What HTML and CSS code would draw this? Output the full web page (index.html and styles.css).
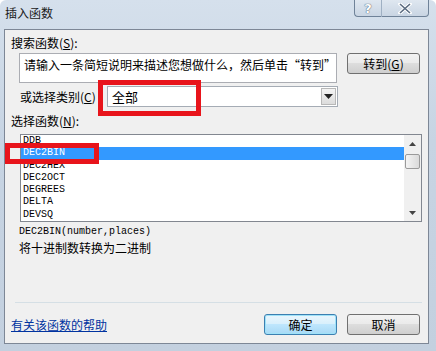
FILE: index.html
```html
<!DOCTYPE html>
<html lang="zh-CN">
<head>
    <meta charset="UTF-8">
    <title>插入函数</title>
    <link rel="stylesheet" href="styles.css">
</head>
<body>

<div class="window">
    <!-- 标题栏 -->
    <div class="titlebar">
        <div class="title">插入函数</div>
        <div class="caption-buttons">
            <div class="cap-btn help">?</div>
            <div class="cap-btn close">
                <svg width="14" height="11" viewBox="0 0 14 11">
                    <path d="M2 1 L12 10 M12 1 L2 10" stroke="#fff" stroke-width="3.4" stroke-linecap="square"/>
                    <path d="M2 1 L12 10 M12 1 L2 10" stroke="#5a6b80" stroke-width="1.6"/>
                </svg>
            </div>
        </div>
    </div>

    <div class="client">
        <div class="label first">搜索函数(<u>S</u>):</div>
        <div class="row search-row">
            <div class="search-box">请输入一条简短说明来描述您想做什么，然后单击“转到”</div>
            <div class="btn go-btn">转到(<u>G</u>)</div>
        </div>

        <div class="row category-row">
            <div class="category-label">或选择类别(<u>C</u>)</div>
            <div class="combo">
                <span class="combo-text">全部</span>
                <span class="combo-arrow">
                    <svg width="9" height="5" viewBox="0 0 9 5"><path d="M0 0 H9 L4.5 5 Z" fill="#222"/></svg>
                </span>
            </div>
        </div>

        <div class="label list-label">选择函数(<u>N</u>):</div>
        <div class="listbox">
            <div class="items">
                <div class="item">DDB</div>
                <div class="item selected">DEC2BIN</div>
                <div class="item">DEC2HEX</div>
                <div class="item">DEC2OCT</div>
                <div class="item">DEGREES</div>
                <div class="item">DELTA</div>
                <div class="item">DEVSQ</div>
            </div>
            <div class="scrollbar">
                <svg width="7" height="4" viewBox="0 0 7 4"><path d="M0 4 H7 L3.5 0 Z" fill="#444"/></svg>
                <div class="thumb"></div>
                <div class="track"></div>
                <svg width="7" height="4" viewBox="0 0 7 4"><path d="M0 0 H7 L3.5 4 Z" fill="#444"/></svg>
            </div>
        </div>

        <div class="signature">DEC2BIN(number,places)</div>
        <div class="description">将十进制数转换为二进制</div>

        <div class="spacer"></div>
        <div class="separator"></div>

        <div class="row footer-row">
            <a class="help-link" href="#">有关该函数的帮助</a>
            <div class="footer-buttons">
                <div class="btn ok-btn">确定</div>
                <div class="btn cancel-btn">取消</div>
            </div>
        </div>
    </div>

    <!-- 红色标注框 -->
    <div class="mark mark-category"></div>
    <div class="mark mark-item"></div>
</div>

</body>
</html>
```

FILE: styles.css
```css
body {
    margin: 0;
    font-family: "Noto Sans CJK SC", "DejaVu Sans", sans-serif;
    font-size: 12px;
    color: #000;
    background-color: #fff;
}
.window {
    position: relative;
    width: 436px;
    height: 351px;
    box-sizing: border-box;
    display: flex;
    flex-direction: column;
    background: linear-gradient(#d5e0ec, #c7d4e3 40%, #c3d0df);
    border-radius: 6px 6px 0 0;
    overflow: hidden;
}
.titlebar {
    height: 29px;
    display: flex;
    justify-content: space-between;
    align-items: flex-start;
    flex-shrink: 0;
}
.title {
    padding: 5px 0 0 5px;
    line-height: 16px;
    font-size: 12px;
    color: #1a1a1a;
}
.caption-buttons {
    display: flex;
    margin-right: 7px;
    margin-top: -1px;
}
.cap-btn {
    height: 18px;
    display: flex;
    align-items: center;
    justify-content: center;
    border: 1px solid #6f8298;
    background: linear-gradient(#dfe7f0, #c9d5e3);
    box-sizing: border-box;
}
.help {
    width: 28px;
    border-radius: 0 0 0 4px;
    border-right: 1px solid #9fb0c3;
    font-family: "DejaVu Sans", sans-serif;
    font-weight: bold;
    font-size: 13px;
    color: #fff;
    text-shadow: 0 0 1px #44566c, 0 0 1px #44566c;
}
.close {
    width: 47px;
    border-left: none;
    border-radius: 0 0 4px 0;
}
.client {
    flex: 1;
    margin: 0 7px 7px 4px;
    border: 1px solid #7d8796;
    background-color: #f0f0f0;
    display: flex;
    flex-direction: column;
    padding: 0 7px 0 6px;
}
.label {
    line-height: 14px;
    margin-top: 5px;
}
.label.first {
    margin-top: 6px;
}
.label.list-label {
    margin-top: 7px;
}
.row {
    display: flex;
}
.search-row {
    margin-top: 3px;
    margin-left: 8px;
    align-items: flex-start;
}
.search-box {
    width: 318px;
    height: 30px;
    box-sizing: border-box;
    border: 1px solid #abadb3;
    background-color: #fff;
    padding: 4px 0 0 4px;
    line-height: 14px;
    white-space: nowrap;
    overflow: hidden;
}
.btn {
    width: 73px;
    height: 21px;
    box-sizing: border-box;
    border: 1px solid #707070;
    border-radius: 3px;
    background: linear-gradient(#f2f2f2 0%, #ebebeb 45%, #dddddd 50%, #cfcfcf 100%);
    display: flex;
    align-items: center;
    justify-content: center;
    line-height: 14px;
}
.go-btn {
    margin-left: 10px;
}
.category-row {
    margin-top: 3px;
    margin-left: 9px;
    align-items: center;
}
.category-label {
    width: 87px;
}
.combo {
    width: 231px;
    height: 21px;
    box-sizing: border-box;
    border: 1px solid #a5acb5;
    background-color: #fff;
    display: flex;
    align-items: center;
    justify-content: space-between;
}
.combo-text {
    padding-left: 4px;
    font-size: 13px;
}
.combo-arrow {
    width: 15px;
    height: 17px;
    margin-right: 1px;
    box-sizing: border-box;
    border: 1px solid #b8b8b8;
    background: linear-gradient(#f4f4f4, #dcdcdc);
    display: flex;
    align-items: center;
    justify-content: center;
}
.listbox {
    margin-top: 6px;
    margin-left: 9px;
    width: 402px;
    height: 88px;
    box-sizing: border-box;
    border: 1px solid #828790;
    background-color: #fff;
    display: flex;
    overflow: hidden;
}
.items {
    flex: 1;
    font-family: "Liberation Mono", "DejaVu Sans Mono", monospace;
    font-size: 10px;
}
.item {
    height: 12.3px;
    line-height: 12px;
    padding-left: 2px;
}
.item.selected {
    background-color: #3399ff;
    color: #fff;
}
.scrollbar {
    width: 17px;
    background-color: #f0f0f0;
    display: flex;
    flex-direction: column;
    align-items: center;
    padding: 7px 0 6px;
    box-sizing: border-box;
}
.thumb {
    width: 15px;
    height: 15px;
    margin-top: 8px;
    box-sizing: border-box;
    border: 1px solid #9a9a9a;
    border-radius: 2px;
    background: linear-gradient(90deg, #f4f4f4, #dadada);
}
.track {
    flex: 1;
}
.signature {
    margin-top: 4px;
    margin-left: 8px;
    font-family: "Liberation Mono", "DejaVu Sans Mono", monospace;
    font-size: 10px;
    line-height: 12px;
}
.description {
    margin-left: 8px;
    margin-top: 3px;
    line-height: 14px;
}
.spacer {
    flex: 1;
}
.separator {
    height: 1px;
    background-color: #d5dfe5;
    margin: 0 -1px 0 4px;
}
.footer-row {
    height: 39px;
    align-items: center;
    justify-content: space-between;
    padding-bottom: 1px;
}
.help-link {
    color: #0033a0;
    text-decoration: underline;
    margin-top: 3px;
}
.footer-buttons {
    display: flex;
    gap: 10px;
    margin-right: 1px;
    margin-top: 4px;
}
.ok-btn {
    border-color: #3c7fb1;
    background: linear-gradient(#eaf6fd 0%, #d9f0fc 45%, #bee6fd 50%, #a7d9f5 100%);
    box-shadow: inset 0 0 0 1px #9fe2f8;
}
/* 红色标注框 */
.mark {
    position: absolute;
    border: 5px solid #e8141b;
    box-sizing: border-box;
}
.mark-category {
    left: 98px;
    top: 80px;
    width: 103px;
    height: 36px;
}
.mark-item {
    left: 5px;
    top: 143px;
    width: 94px;
    height: 21px;
}
```
